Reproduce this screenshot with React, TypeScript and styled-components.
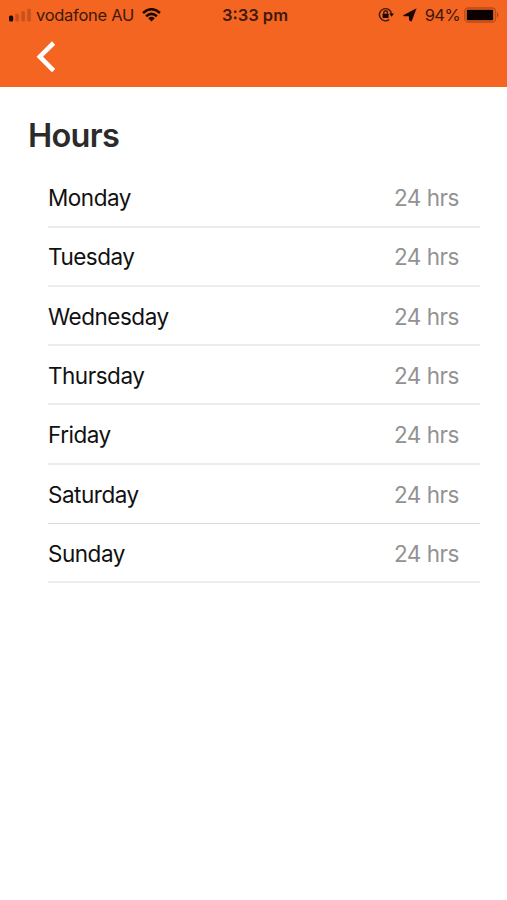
import React from "react";
import styled, { createGlobalStyle } from "styled-components";

const Global = createGlobalStyle`
  *{box-sizing:border-box}
  body{margin:0;background:#fff;font-family:Inter,"Liberation Sans",sans-serif}
`;
const Screen = styled.main`
  width: 507px;
  height: 900px;
  background: #fff;
  overflow: hidden;
`;
const Header = styled.header`
  height: 87px;
  background: #f46522;
`;
const StatusBar = styled.div`
  height: 29px;
  display: grid;
  grid-template-columns: 1fr auto 1fr;
  align-items: center;
  padding: 0 7px 0 8px;
  color: #40190a;
  font-size: 16.5px;
`;
const Group = styled.div<{ $end?: boolean }>`
  display: flex;
  align-items: center;
  justify-content: ${p => (p.$end ? "flex-end" : "flex-start")};
`;
const Carrier = styled.span`
  margin: 0 8px 0 4px;
  white-space: nowrap;
  letter-spacing: -0.28px;
`;
const Percent = styled.span`
  margin: 0 4px 0 7px;
  letter-spacing: -0.6px;
`;
const Clock = styled.time`
  font-weight: 600;
  padding-left: 2px;
`;
const Icon = styled.svg`
  display: block;
  flex: none;
`;
const Nav = styled.nav`
  height: 58px;
  padding: 11px 0 0 35px;
`;
const Back = styled.button`
  border: 0;
  background: none;
  padding: 0;
  display: block;
`;
const Title = styled.h1`
  margin: 0;
  padding: 29px 0 0 28px;
  font-size: 32.5px;
  line-height: 40px;
  font-weight: 600;
  letter-spacing: -0.7px;
  color: #2b2b2b;
`;
const List = styled.ul`
  list-style: none;
  margin: 12.3px 27px 0 48px;
  padding: 0;
`;
const Row = styled.li<{ $fine?: boolean }>`
  height: 59.3px;
  border-bottom: ${p => (p.$fine ? "1px solid #dcdcdc" : "2px solid #ececec")};
  padding: 1px 21px 0 0;
  display: flex;
  justify-content: space-between;
  align-items: center;
  font-size: 22.5px;
  letter-spacing: -0.48px;
  color: #111;
`;
const Value = styled.span`
  color: #929292;
`;
const days = ["Monday", "Tuesday", "Wednesday", "Thursday", "Friday", "Saturday", "Sunday"];

export default function App() {
  return (
    <Screen>
      <Global />
      <Header>
        <StatusBar>
          <Group>
            <Icon width="24" height="14" viewBox="0 0 24 14">
              <rect x="1" y="7.5" width="4.2" height="6" rx="1.6" fill="#1c0800" />
              <g fill="#c9521c">
                <rect x="7.3" y="5.8" width="3.6" height="7.7" rx="1" />
                <rect x="13.3" y="3.2" width="3.6" height="10.3" rx="1" />
                <rect x="19.3" y="0.8" width="3.6" height="12.7" rx="1" />
              </g>
            </Icon>
            <Carrier>vodafone AU</Carrier>
            <Icon width="19" height="14" viewBox="0 0 19 14" fill="none" stroke="#1c0800" strokeWidth="2.5">
              <path d="M1 5Q9.5-2.6 18 5M4.1 8.2q5.4-4.6 10.8 0" />
              <path d="M6.2 10.3Q9.5 7.4 12.8 10.3L9.5 13.6Z" fill="#1c0800" stroke="none" />
            </Icon>
          </Group>
          <Clock>3:33 pm</Clock>
          <Group $end>
            <Icon width="17" height="15" viewBox="0 0 17 15" fill="none" stroke="#40190a" strokeWidth="1.4">
              <path d="M11.2 12.6A6.1 6.1 0 1 1 13.6 7" />
              <path d="M11.2 6.5h4.8l-2.4 3.3Z" fill="#1c0800" stroke="none" />
              <rect x="4.6" y="6.7" width="6" height="4.3" rx=".6" fill="#1c0800" stroke="none" />
              <path d="M5.8 7V5.5a1.8 1.8 0 0 1 3.6 0V7" />
            </Icon>
            <Icon width="23" height="15" viewBox="0 0 23 15" fill="#1c0800">
              <path d="M8.2 8.2 21.6 1.2 16.6 14.5 14.2 13.6 13.8 9.2 8.6 9.2Z" />
            </Icon>
            <Percent>94%</Percent>
            <Icon width="36" height="16" viewBox="0 0 36 16">
              <rect x="0.8" y="1" width="30.7" height="14" rx="3.5" fill="none" stroke="#b84b1b" strokeWidth="1.3" />
              <rect x="2.8" y="2.8" width="26.4" height="10.4" rx="1" fill="#0c0300" />
              <path d="M33 5.3q3 2.7 0 5.4Z" fill="#a94419" />
            </Icon>
          </Group>
        </StatusBar>
        <Nav>
          <Back aria-label="Back">
            <Icon width="24" height="34" viewBox="0 0 24 34" fill="none" stroke="#fff" strokeWidth="4.6">
              <path d="M18.6 3 4.8 16.7l13.8 13.9" />
            </Icon>
          </Back>
        </Nav>
      </Header>
      <Title>Hours</Title>
      <List>
        {days.map(d => (
          <Row key={d} $fine={d === "Saturday"}>
            <span>{d}</span>
            <Value>24 hrs</Value>
          </Row>
        ))}
      </List>
    </Screen>
  );
}
